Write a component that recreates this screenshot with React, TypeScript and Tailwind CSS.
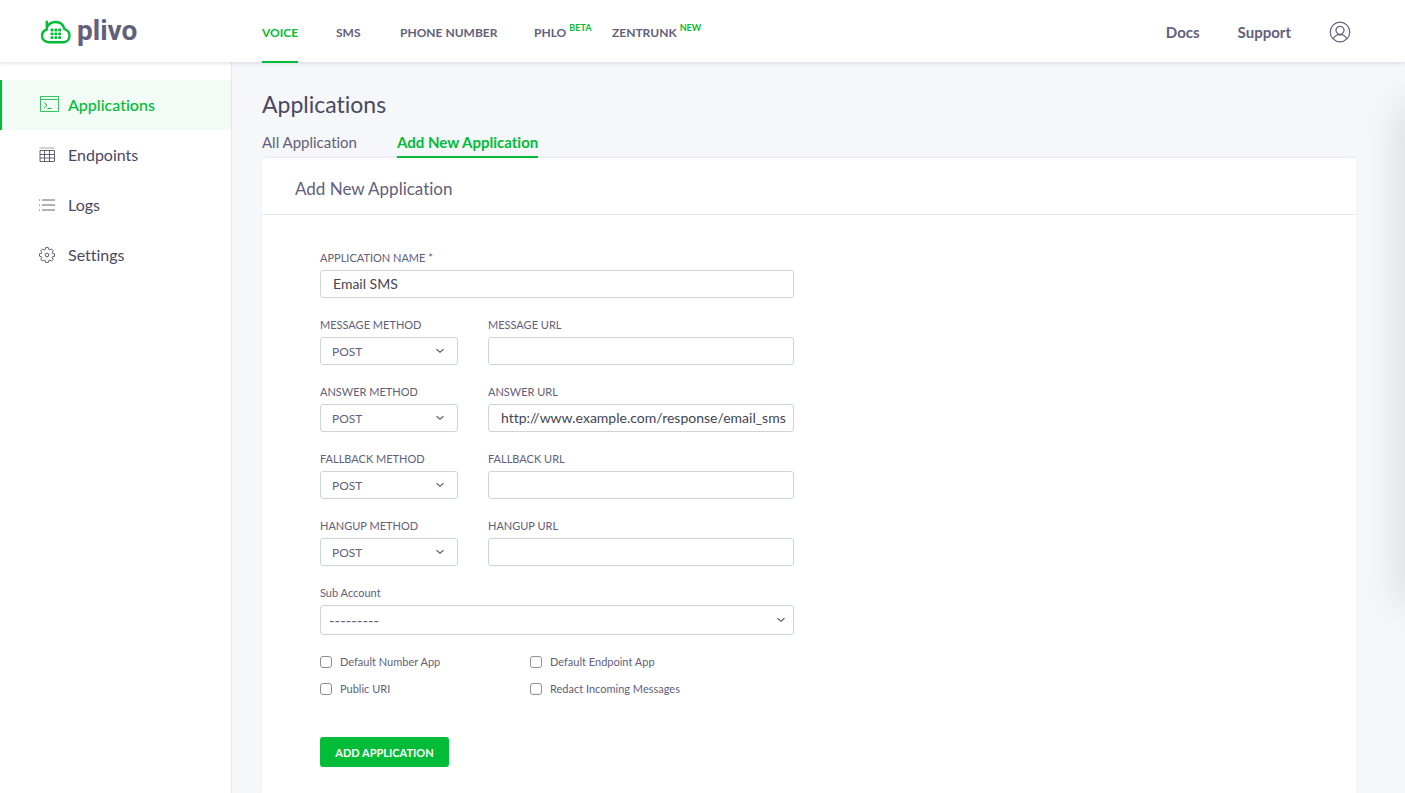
import React, { useState } from "react";

const navItems = [
  { label: "VOICE", width: "w-9 mr-[38px]", active: true },
  { label: "SMS", width: "w-[26px] mr-[38px]" },
  { label: "PHONE NUMBER", width: "w-24 mr-[38px]" },
  { label: "PHLO", width: "w-[59px] mr-[19px]", tag: "BETA" },
  { label: "ZENTRUNK", width: "w-[88px]", tag: "NEW" },
];

const callbacks = [
  { id: "message", label: "MESSAGE", url: "" },
  { id: "answer", label: "ANSWER", url: "http://www.example.com/response/email_sms" },
  { id: "fallback", label: "FALLBACK", url: "" },
  { id: "hangup", label: "HANGUP", url: "" },
];

const flags = ["Default Number App", "Default Endpoint App", "Public URI", "Redact Incoming Messages"];

function CloudLogo() {
  return (
    <svg width="32" height="26" viewBox="0 0 32 26" fill="none" aria-hidden="true">
      <path
        d="M6.8 10.5V2.6M6.8 8.6C8.4 5 12 3 15.7 3c4.500 0 7.700 2.700 8.800 7.200 3 .9 5 3.200 5 6.300 0 4-2.800 6.700-6.500 6.700H8.800C5 23.200 2 20.500 2 16.800c0-3 1.700-5.300 4.800-6.300"
        stroke="#00bc36"
        strokeWidth="2.400"
        strokeLinecap="round"
        strokeLinejoin="round"
      />
      <g fill="#00bc36">
        {[10.6, 14.4, 18.2].map((x) =>
          [9.6, 13.4, 17.2].map((y) => <rect key={`${x}-${y}`} x={x} y={y} width="2.900" height="2.900" rx="0.800" />),
        )}
      </g>
    </svg>
  );
}

function TerminalIcon() {
  return (
    <svg width="20" height="18" viewBox="0 0 20 18" fill="none" stroke="currentColor" aria-hidden="true">
      <path d="M.5 .5h18v15H.5zM.5 3.500h18" strokeOpacity=".8" />
      <path d="M4 6.500l3 2.800-3 2.800M7.500 12.500h4" />
    </svg>
  );
}

function TableIcon() {
  return (
    <svg width="16" height="16" viewBox="0 0 16 16" fill="none" stroke="currentColor" strokeOpacity=".85" aria-hidden="true">
      <path d="M.5 1h15" strokeOpacity=".5" />
      <path d="M1 3.500h14.500v11H1zM1 7.500h14.500M1 11h14.500M5.500 3.500v11M10.500 3.500v11" />
    </svg>
  );
}

function ListIcon() {
  return (
    <svg width="16" height="16" viewBox="0 0 16 16" fill="none" stroke="currentColor" aria-hidden="true">
      <path d="M3 3h13M3 8h13M3 13h13M0 3h1M0 8h1M0 13h1" strokeOpacity=".85" />
    </svg>
  );
}

function GearIcon() {
  return (
    <svg width="16" height="16" viewBox="0 0 16 16" fill="none" stroke="currentColor" strokeLinejoin="round" aria-hidden="true">
      <path d="M6.700.6h2.600l.5 1.900 1 .4 1.700-1 1.700 1.700-1 1.700.4 1 1.900.5v2.400l-1.900.5-.4 1 1 1.700-1.700 1.700-1.700-1-1 .4-.5 1.900H6.700l-.5-1.900-1-.4-1.700 1-1.700-1.700 1-1.700-.4-1L.5 9.200V6.800l1.900-.5.4-1-1-1.700 1.700-1.700 1.700 1 1-.4z" strokeWidth=".9" />
      <circle cx="8" cy="8" r="1.800" strokeWidth=".9" />
    </svg>
  );
}

function UserIcon() {
  return (
    <svg width="22" height="22" viewBox="0 0 22 22" fill="none" stroke="currentColor" strokeWidth="1.200" aria-hidden="true">
      <circle cx="11" cy="11" r="9.800" />
      <circle cx="11" cy="9.300" r="4" />
      <path d="M4 17.800c1.200-2.300 3.400-3.600 4.800-4.300 1.400.6 3 .6 4.400 0 1.700.7 3.700 2 4.800 4.300" />
    </svg>
  );
}

function Chevron({ className }: { className: string }) {
  return (
    <svg className={`pointer-events-none absolute inset-y-0 my-auto ${className}`} width="10" height="8" viewBox="0 0 10 8" fill="none" stroke="#62607a" strokeWidth="1.200" aria-hidden="true">
      <path d="M1.500 2.200 5 5.200l3.500-3" />
    </svg>
  );
}

const sideItems = [
  { label: "Applications", icon: <TerminalIcon />, active: true },
  { label: "Endpoints", icon: <TableIcon /> },
  { label: "Logs", icon: <ListIcon /> },
  { label: "Settings", icon: <GearIcon /> },
];

const labelClass = "mb-1 block text-[11px] leading-4 text-[#62607a]";
const inputClass = "block h-7 w-full rounded-[3px] border border-[#ccd5db] bg-white pr-1 pb-0.5 pl-3 text-[14px] text-[#3f4652] outline-none";

export default function App() {
  const [name, setName] = useState("Email SMS");

  return (
    <div className="flex min-h-screen flex-col overflow-hidden bg-[#f5f7fb] font-['Lato',sans-serif] text-[#62607a] [font-variant-ligatures:none]">
      <header className="z-10 flex h-[62px] items-center bg-white pr-[54px] shadow-[0_1px_4px_rgba(60,60,100,0.18)]">
        <a href="#home" aria-label="plivo" className="flex w-[262px] shrink-0 items-center gap-[5px] pt-0.5 pl-10">
          <CloudLogo />
          <span className="pb-0.5 font-['Roboto',sans-serif] text-[28px] leading-8 font-bold">plivo</span>
        </a>
        <nav className="flex h-full flex-1 text-[12px] font-bold">
          {navItems.map((item) => (
            <a
              key={item.label}
              href={`#${item.label.toLowerCase()}`}
              className={`relative flex h-[63px] items-center whitespace-nowrap pt-0.5 ${item.width} ${item.active ? "border-b-2 border-[#00bc36] pt-1 text-[#00bc36]" : ""}`}
            >
              {item.label}
              {item.tag && <sup className="ml-[3px] text-[9px] font-bold text-[#00bc36]">{item.tag}</sup>}
            </a>
          ))}
        </nav>
        <div className="flex items-center pt-0.5 text-[15px] font-bold">
          <a href="#docs" className="mr-[38px]">Docs</a>
          <a href="#support" className="mr-[38px]">Support</a>
          <button type="button" aria-label="Account"><UserIcon /></button>
        </div>
      </header>

      <div className="flex flex-1">
        <aside className="w-[232px] shrink-0 border-r border-[#e5e6ef] bg-white pt-[18px]">
          {sideItems.map((item) => (
            <a
              key={item.label}
              href={`#${item.label.toLowerCase()}`}
              className={`flex h-[50px] items-center text-[16px] ${item.active ? "border-l-2 border-[#00bc36] bg-[#f2fbf5] pl-[38px] font-medium text-[#00bc36]" : "pl-[39px] text-[#4a485f]"}`}
            >
              <span className={item.active ? "w-7" : "w-[29px]"}>{item.icon}</span>
              {item.label}
            </a>
          ))}
        </aside>

        <main className="relative flex flex-1 flex-col pt-7 pr-[49px] pl-[30px]">
          <h1 className="text-[23px] leading-7 text-[#4a485f]">Applications</h1>
          <div className="mt-3 flex h-7 gap-10 text-[15px] leading-6">
            <a href="#all">All Application</a>
            <a href="#add" className="z-10 border-b-2 border-[#00bc36] font-bold text-[#00bc36]">Add New Application</a>
          </div>
          <section className="flex-1 rounded-t-[3px] bg-white shadow-[0_-1px_2px_rgba(60,60,100,0.08)]">
            <h2 className="h-[57px] border-b border-[#e5e6ef] pt-1 pl-[33px] text-[17px] leading-[54px]">Add New Application</h2>
            <form className="w-[532px] pt-[35px] pl-[58px]" onSubmit={(e) => e.preventDefault()}>
              <div className="mb-[19px]">
                <label htmlFor="name" className={labelClass}>APPLICATION NAME *</label>
                <input id="name" className={inputClass} value={name} onChange={(e) => setName(e.target.value)} />
              </div>
              {callbacks.map((row) => (
                <div key={row.id} className="mb-[19px] flex gap-[30px]">
                  <div className="w-[138px]">
                    <label htmlFor={`${row.id}-method`} className={labelClass}>{row.label} METHOD</label>
                    <div className="relative">
                      <select id={`${row.id}-method`} className="block h-7 w-full appearance-none rounded-[3px] border border-[#ccd5db] bg-white px-[11px] pt-0.5 text-[12px] text-[#62607a]">
                        <option>POST</option>
                        <option>GET</option>
                      </select>
                      <Chevron className="right-[13px]" />
                    </div>
                  </div>
                  <div className="flex-1">
                    <label htmlFor={`${row.id}-url`} className={labelClass}>{row.label} URL</label>
                    <input id={`${row.id}-url`} className={inputClass} defaultValue={row.url} />
                  </div>
                </div>
              ))}
              <label htmlFor="sub" className={labelClass}>Sub Account</label>
              <div className="relative">
                <select id="sub" className="block h-[30px] w-full appearance-none rounded-[3px] border border-[#ccd5db] bg-white px-2 text-[15px] text-[#62607a]">
                  <option>---------</option>
                </select>
                <Chevron className="right-2" />
              </div>
              <div className="mt-[19px] grid grid-cols-[210px_1fr] gap-y-[11px] text-[11px] leading-4">
                {flags.map((flag) => (
                  <label key={flag} className="flex items-center gap-2">
                    <input type="checkbox" className="size-3 appearance-none rounded-[3px] border border-[#8d8d94] bg-white checked:bg-[#00bc36]" />
                    {flag}
                  </label>
                ))}
              </div>
              <button type="submit" className="mt-10 mb-[26px] h-[30px] w-[129px] rounded-[3px] bg-[#00bc36] pt-0.5 text-[11px] font-bold text-white">ADD APPLICATION</button>
            </form>
          </section>
          <div className="pointer-events-none absolute top-[42px] -right-5 h-[500px] w-5 shadow-[0_0_40px_rgba(0,0,0,0.2)]" />
        </main>
      </div>
    </div>
  );
}
